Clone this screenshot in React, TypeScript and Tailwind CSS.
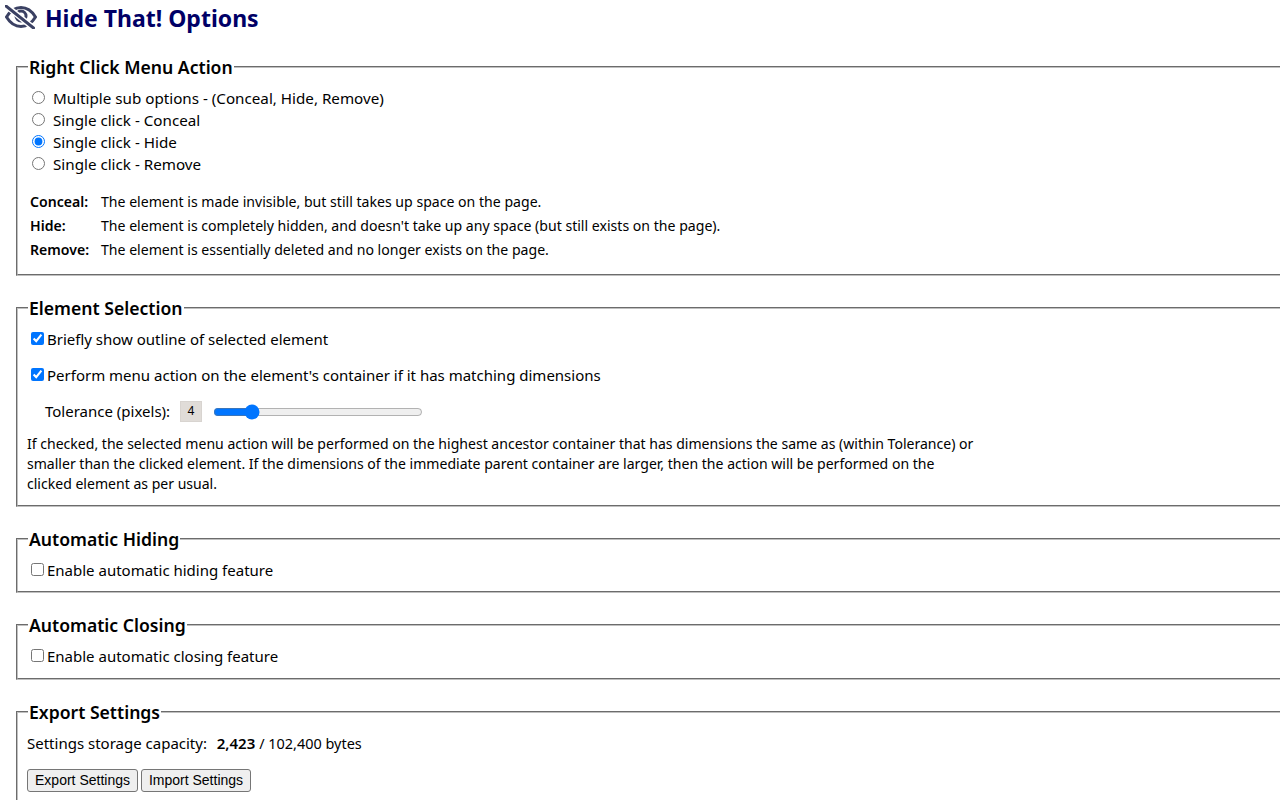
function Box({ title, className, children }: { title: string; className: string; children: React.ReactNode }) {
  return (
    <fieldset className={`ml-4 -mr-4 border-2 border-[#c0c0c0] [border-style:groove] pl-[9px] ${className}`}>
      <legend className="ml-[1px] px-[1px] text-[17.6px] leading-[24px] font-semibold text-black">{title}</legend>
      {children}
    </fieldset>
  );
}

function Radio({ label, checked }: { label: string; checked?: boolean }) {
  return (
    <label className="flex h-[22px] items-center">
      <input type="radio" name="action" defaultChecked={checked} className="mb-[2px] ml-[5px] mr-[8px] h-[13px] w-[13px]" />
      <span>{label}</span>
    </label>
  );
}

function Check({ label, checked, className }: { label: string; checked?: boolean; className?: string }) {
  return (
    <label className={`flex h-[22px] items-center text-[15px] ${className ?? ""}`}>
      <input type="checkbox" defaultChecked={checked} className="mb-[2px] ml-[4px] mr-[3px] h-[13px] w-[13px]" />
      <span>{label}</span>
    </label>
  );
}

function Def({ term, text }: { term: string; text: string }) {
  return (
    <div className="flex h-[24px] items-center text-[14.1px]">
      <b className="ml-[3px] w-[71px] font-semibold">{term}</b>
      <span>{text}</span>
    </div>
  );
}

function EyeIcon() {
  return (
    <svg viewBox="0 0 32 24" className="mb-[2px] ml-[5px] mr-[8px] h-[24px] w-[32px] text-[#3b4163]" fill="none" stroke="currentColor">
      <path d="M1.5 12 C6 4.5 11 2.5 16 2.5 C21 2.5 26 4.5 30.5 12 C26 19.5 21 21.5 16 21.5 C11 21.5 6 19.5 1.5 12 Z" strokeWidth="3" />
      <circle cx="16" cy="11" r="5" strokeWidth="3" />
      <path d="M2 1.5 L28.5 23" stroke="#ffffff" strokeWidth="6" />
      <path d="M1 1 L28.5 23" strokeWidth="3" strokeLinecap="round" />
    </svg>
  );
}

export default function App() {
  return (
    <div className="h-[800px] w-[1280px] overflow-hidden bg-white text-[15.2px] text-black font-['Noto_Sans','Open_Sans',sans-serif]">
      <h1 className="flex h-[36px] items-center text-[23px] font-bold text-[#000066]">
        <EyeIcon />
        Hide That! Options
      </h1>
      <div className="flex flex-col gap-[20px] pt-[19px]">
        <Box title="Right Click Menu Action" className="h-[221px]">
          <div className="pt-[8px]">
            <Radio label="Multiple sub options - (Conceal, Hide, Remove)" />
            <Radio label="Single click - Conceal" />
            <Radio label="Single click - Hide" checked />
            <Radio label="Single click - Remove" />
          </div>
          <div className="pt-[15px]">
            <Def term="Conceal:" text="The element is made invisible, but still takes up space on the page." />
            <Def term="Hide:" text="The element is completely hidden, and doesn't take up any space (but still exists on the page)." />
            <Def term="Remove:" text="The element is essentially deleted and no longer exists on the page." />
          </div>
        </Box>
        <Box title="Element Selection" className="h-[211px]">
          <Check label="Briefly show outline of selected element" checked className="mt-[8px]" />
          <Check label="Perform menu action on the element's container if it has matching dimensions" checked className="mt-[14px]" />
          <div className="mt-[14px] flex h-[22px] items-center text-[15px]">
            <span className="ml-[18px] w-[135px]">Tolerance (pixels):</span>
            <span className="flex h-[21px] w-[22px] items-center justify-center border border-[#d8d4d0] bg-[#e0dcd8] text-[12px]">4</span>
            <input type="range" min={0} max={25} defaultValue={4} className="ml-[11px] mt-[2px] h-[16px] w-[210px]" />
          </div>
          <p className="mt-[12px] w-[950px] text-[14.05px] leading-[20px]">
            If checked, the selected menu action will be performed on the highest ancestor container that has dimensions the same as (within Tolerance) or smaller than the clicked element. If the dimensions of the immediate parent container are larger, then the action will be performed on the clicked element as per usual.
          </p>
        </Box>
        <Box title="Automatic Hiding" className="h-[66px]">
          <Check label="Enable automatic hiding feature" className="mt-[8px]" />
        </Box>
        <Box title="Automatic Closing" className="h-[67px]">
          <Check label="Enable automatic closing feature" className="mt-[8px]" />
        </Box>
        <Box title="Export Settings" className="h-[120px]">
          <p className="mt-[8px] h-[22px] text-[15px] leading-[22px]">
            Settings storage capacity:&nbsp; <b className="ml-[2px] font-semibold">2,423</b> <span className="text-[14.45px]">/ 102,400 bytes</span>
          </p>
          <div className="mt-[15px] flex gap-[3px] font-['Liberation_Sans',sans-serif] text-[14px]">
            <button className="h-[23px] w-[111px] rounded-[3px] border border-[#767676] bg-[#efefef]">Export Settings</button>
            <button className="h-[23px] w-[110px] rounded-[3px] border border-[#767676] bg-[#efefef]">Import Settings</button>
          </div>
        </Box>
      </div>
    </div>
  );
}
